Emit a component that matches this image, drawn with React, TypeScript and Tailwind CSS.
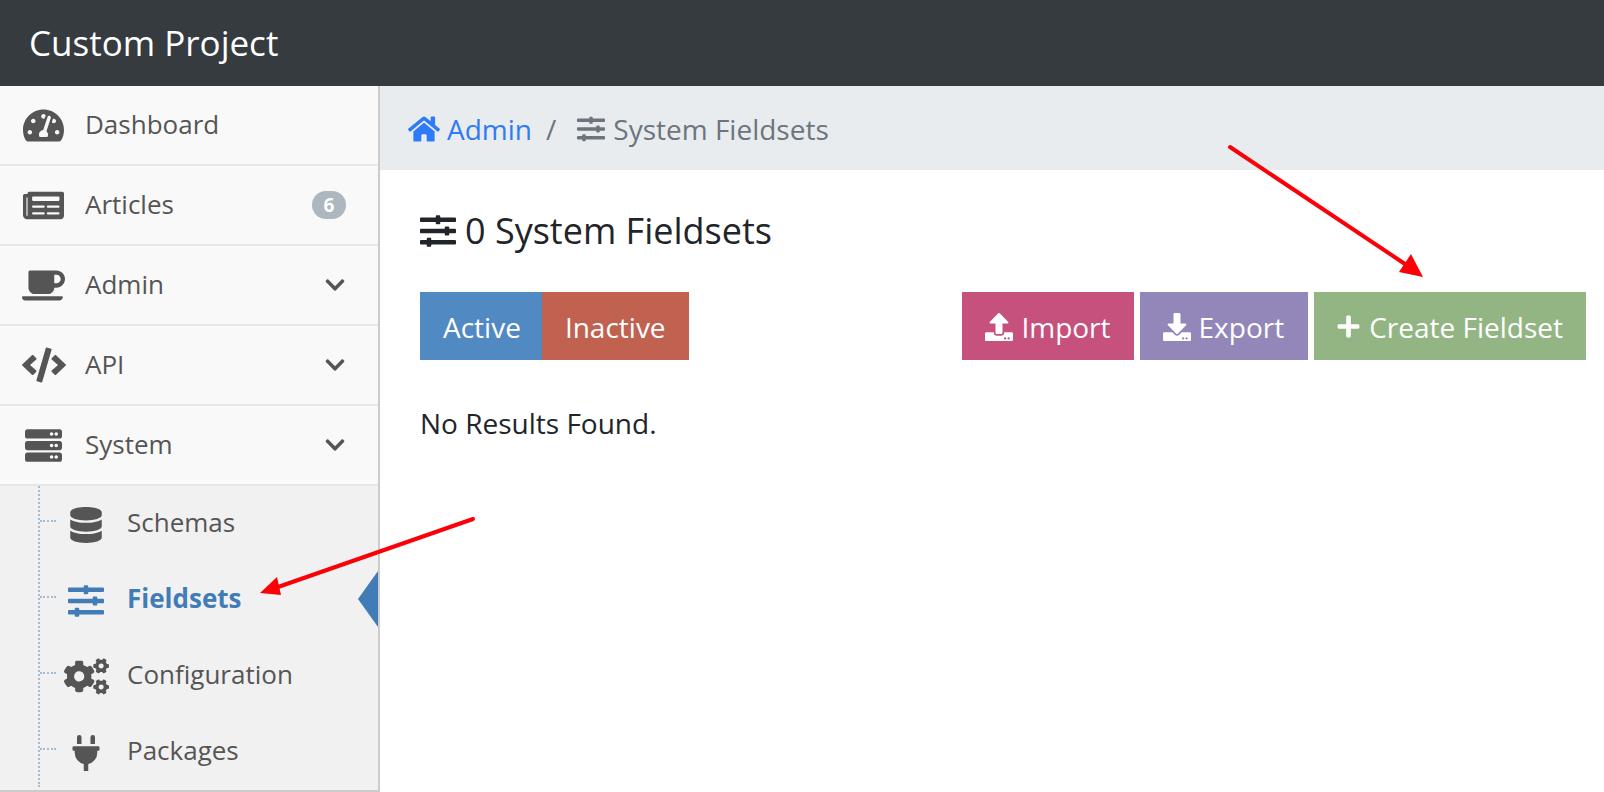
import type { ComponentType, ReactNode } from 'react';
import {
  FaChevronDown,
  FaCode,
  FaCoffee,
  FaCogs,
  FaDatabase,
  FaDownload,
  FaHome,
  FaNewspaper,
  FaPlug,
  FaPlus,
  FaServer,
  FaSlidersH,
  FaTachometerAlt,
  FaUpload,
} from 'react-icons/fa';

type IconType = ComponentType<{ size?: number; className?: string }>;

const MENU: { label: string; icon: IconType; size: number; badge?: string; caret?: boolean }[] = [
  { label: 'Dashboard', icon: FaTachometerAlt, size: 41 },
  { label: 'Articles', icon: FaNewspaper, size: 41, badge: '6' },
  { label: 'Admin', icon: FaCoffee, size: 43, caret: true },
  { label: 'API', icon: FaCode, size: 44, caret: true },
  { label: 'System', icon: FaServer, size: 37, caret: true },
];

const SUBMENU: { label: string; icon: IconType; size: number; active?: boolean }[] = [
  { label: 'Schemas', icon: FaDatabase, size: 36 },
  { label: 'Fieldsets', icon: FaSlidersH, size: 36, active: true },
  { label: 'Configuration', icon: FaCogs, size: 45 },
  { label: 'Packages', icon: FaPlug, size: 36 },
];

function ActionButton({ color, children }: { color: string; children: ReactNode }) {
  return (
    <button className={`flex h-[68px] items-center gap-2 pt-[1px] text-[28px] text-white ${color}`}>
      {children}
    </button>
  );
}

function Sidebar() {
  return (
    <aside className="flex w-[380px] shrink-0 flex-col border-r-2 border-b-2 border-[#cccccc] bg-[#f9f9f9] text-[#555555]">
      {MENU.map(({ label, icon: Icon, size, badge, caret }) => (
        <div key={label} className="flex h-20 items-center border-b-2 border-[#e7e7e7] pr-[32px]">
          <div className="flex w-[85px] shrink-0 justify-center pl-[2px]">
            <Icon size={size} />
          </div>
          <span className="mb-[2px] flex-1 text-[26px]">{label}</span>
          {badge && (
            <span className="flex h-[28px] w-[34px] items-center justify-center rounded-full bg-[#acb7bf] text-[19px] font-bold text-white">
              {badge}
            </span>
          )}
          {caret && <FaChevronDown size={22} />}
        </div>
      ))}
      <div className="flex-1 overflow-hidden bg-[#f1f1f1]">
        <div className="ml-[38px] h-full border-l-2 border-dotted border-[#a3bcd6]">
          <div className="-mt-[3px]">
            {SUBMENU.map(({ label, icon: Icon, size, active }) => (
              <div
                key={label}
                className={`relative flex h-[76px] items-center ${active ? 'font-bold text-[#417cb7]' : ''}`}
              >
                <div className="w-[16px] border-t-2 border-dotted border-[#a3bcd6]" />
                <div className="mr-[11px] flex w-[60px] shrink-0 justify-center pt-[7px]">
                  <Icon size={size} />
                </div>
                <span className="mt-[2px] text-[26px]">{label}</span>
                {active && (
                  <div className="absolute right-0 mt-[3px] h-0 w-0 border-y-[28px] border-r-[20px] border-y-transparent border-r-[#417cb7]" />
                )}
              </div>
            ))}
          </div>
        </div>
      </div>
    </aside>
  );
}

export default function App() {
  return (
    <div className="relative flex h-[792px] flex-col overflow-hidden bg-white font-['Open_Sans',sans-serif]">
      <header className="flex h-[86px] shrink-0 items-center bg-[#363b3f] px-[29px] text-[35px] text-white">
        Custom Project
      </header>
      <div className="flex min-h-0 flex-1">
        <Sidebar />
        <main className="min-w-0 flex-1">
          <nav className="flex h-[84px] items-center bg-[#e9ecef] px-[28px] pt-[1px] text-[28px]">
            <FaHome size={32} className="text-[#2f7bf6]" />
            <span className="ml-[7px] text-[#2f7bf6]">Admin</span>
            <span className="mr-[21px] ml-[14px] text-[#6c757d]">/</span>
            <FaSlidersH size={28} className="text-[#6c757d]" />
            <span className="ml-[8px] text-[#6c757d]">System Fieldsets</span>
          </nav>
          <div className="pr-[18px] pl-[40px] text-[#212529]">
            <h1 className="mt-[36px] flex items-center gap-[9px] text-[36px] leading-[50px]">
              <FaSlidersH size={36} />0 System Fieldsets
            </h1>
            <div className="mt-[36px] flex justify-between">
              <div className="flex">
                <ActionButton color="bg-[#5189c3] pr-[21px] pl-[23px]">Active</ActionButton>
                <ActionButton color="bg-[#c1614f] pr-[23px] pl-[23px]">Inactive</ActionButton>
              </div>
              <div className="flex gap-[6px]">
                <ActionButton color="bg-[#c5517c] px-[23px]">
                  <FaUpload size={28} />
                  Import
                </ActionButton>
                <ActionButton color="bg-[#9387b9] pr-[24px] pl-[23px]">
                  <FaDownload size={28} />
                  Export
                </ActionButton>
                <ActionButton color="bg-[#93b584] pr-[23px] pl-[22px]">
                  <FaPlus size={25} />
                  Create Fieldset
                </ActionButton>
              </div>
            </div>
            <p className="mt-[44px] text-[28px] leading-[38px]">No Results Found.</p>
          </div>
        </main>
      </div>

      {/* annotation arrows drawn over the screenshot */}
      <svg className="pointer-events-none absolute inset-0" width="1604" height="792">
        <line x1="1230" y1="147" x2="1408" y2="266" stroke="#fb0007" strokeWidth="4" strokeLinecap="round" />
        <polygon points="1423,277 1399,272 1411,254" fill="#fb0007" />
        <line x1="473" y1="519" x2="278" y2="587" stroke="#fb0007" strokeWidth="4" strokeLinecap="round" />
        <polygon points="260,593 277,577 281,595" fill="#fb0007" />
      </svg>
    </div>
  );
}
